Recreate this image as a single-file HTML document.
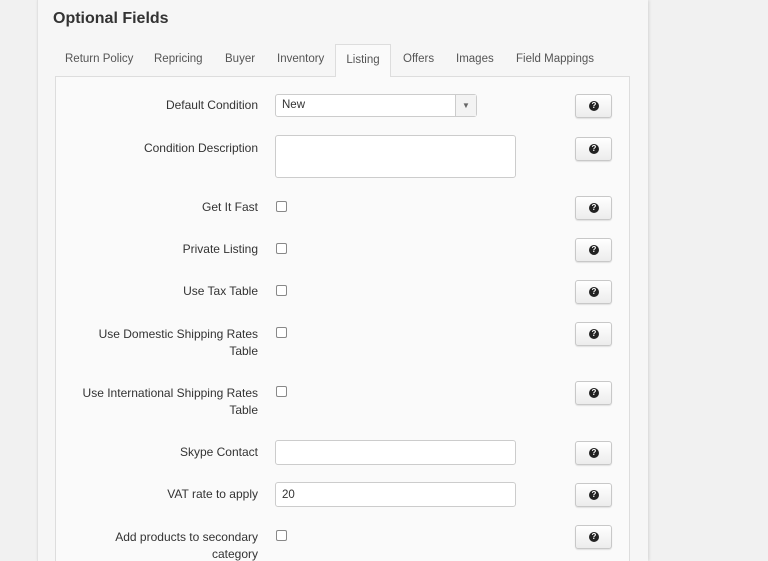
<!DOCTYPE html>
<html><head><style>
*{box-sizing:border-box}
html,body{margin:0;width:768px;height:561px;overflow:hidden}
body{background:#f1f1f1;font-family:"Liberation Sans",sans-serif;position:relative}
.main{position:absolute;left:37px;top:0;width:611px;height:561px;background:#f6f6f6;border-left:1px solid #e2e2e2;box-shadow:1px 0 3px rgba(0,0,0,.12)}
h1{position:absolute;left:53px;top:10px;margin:0;font-size:16px;font-weight:bold;color:#333}
.tab{position:absolute;top:53px;font-size:11.5px;color:#555}
.act{position:absolute;left:335px;top:44px;width:56px;height:33px;background:#fafafa;border:1px solid #ddd;border-bottom:none;z-index:2;font-size:11.5px;color:#555;text-align:center;padding-top:9px}
.box{position:absolute;left:55px;top:76px;width:575px;height:490px;background:#fafafa;border:1px solid #ddd}
.l{position:absolute;right:510px;font-size:12px;color:#333;text-align:right;line-height:17px}
.in{position:absolute;left:275px;background:#fff;border:1px solid #ccc;border-radius:3px;font-size:11.5px;color:#333;padding:5px 6px}
.cb{position:absolute;left:276px;width:11px;height:11px;border:1px solid #888;border-radius:2px;background:#fff}
.b{position:absolute;left:575px;width:37px;height:24px;background:linear-gradient(#fff,#ececec);border:1px solid #c8c8c8;border-radius:3px;box-shadow:0 1px 1px rgba(0,0,0,.1)}
.b:after{content:"?";position:absolute;left:13px;top:6px;width:10px;height:10px;border-radius:50%;background:#222;color:#fff;font-size:8px;font-weight:bold;text-align:center;line-height:10px}
</style></head><body>
<div class="main"></div>
<h1>Optional Fields</h1>
<span class="tab" style="left:65px">Return Policy</span>
<span class="tab" style="left:154px">Repricing</span>
<span class="tab" style="left:225px">Buyer</span>
<span class="tab" style="left:277px">Inventory</span>
<div class="act">Listing</div>
<span class="tab" style="left:403px">Offers</span>
<span class="tab" style="left:456px">Images</span>
<span class="tab" style="left:516px">Field Mappings</span>
<div class="box"></div>

<div class="l" style="top:97px">Default Condition</div>
<div class="in" style="top:94px;width:202px;height:23px;padding-top:4px">New<span style="position:absolute;right:0;top:0;width:21px;height:21px;border-left:1px solid #ccc;background:#f3f3f3;font-size:8px;color:#666;text-align:center;line-height:21px">▼</span></div>
<div class="b" style="top:94px"></div>

<div class="l" style="top:140px">Condition Description</div>
<div class="in" style="top:135px;width:241px;height:43px"></div>
<div class="b" style="top:137px"></div>

<div class="l" style="top:199px">Get It Fast</div><div class="cb" style="top:201px"></div><div class="b" style="top:196px"></div>
<div class="l" style="top:241px">Private Listing</div><div class="cb" style="top:243px"></div><div class="b" style="top:238px"></div>
<div class="l" style="top:283px">Use Tax Table</div><div class="cb" style="top:285px"></div><div class="b" style="top:280px"></div>
<div class="l" style="top:326px">Use Domestic Shipping Rates<br>Table</div><div class="cb" style="top:327px"></div><div class="b" style="top:322px"></div>
<div class="l" style="top:385px">Use International Shipping Rates<br>Table</div><div class="cb" style="top:386px"></div><div class="b" style="top:381px"></div>

<div class="l" style="top:444px">Skype Contact</div>
<div class="in" style="top:440px;width:241px;height:25px"></div>
<div class="b" style="top:441px"></div>

<div class="l" style="top:486px">VAT rate to apply</div>
<div class="in" style="top:482px;width:241px;height:25px;padding-top:6px">20</div>
<div class="b" style="top:483px"></div>

<div class="l" style="top:529px">Add products to secondary<br>category</div><div class="cb" style="top:530px"></div><div class="b" style="top:525px"></div>
</body></html>
